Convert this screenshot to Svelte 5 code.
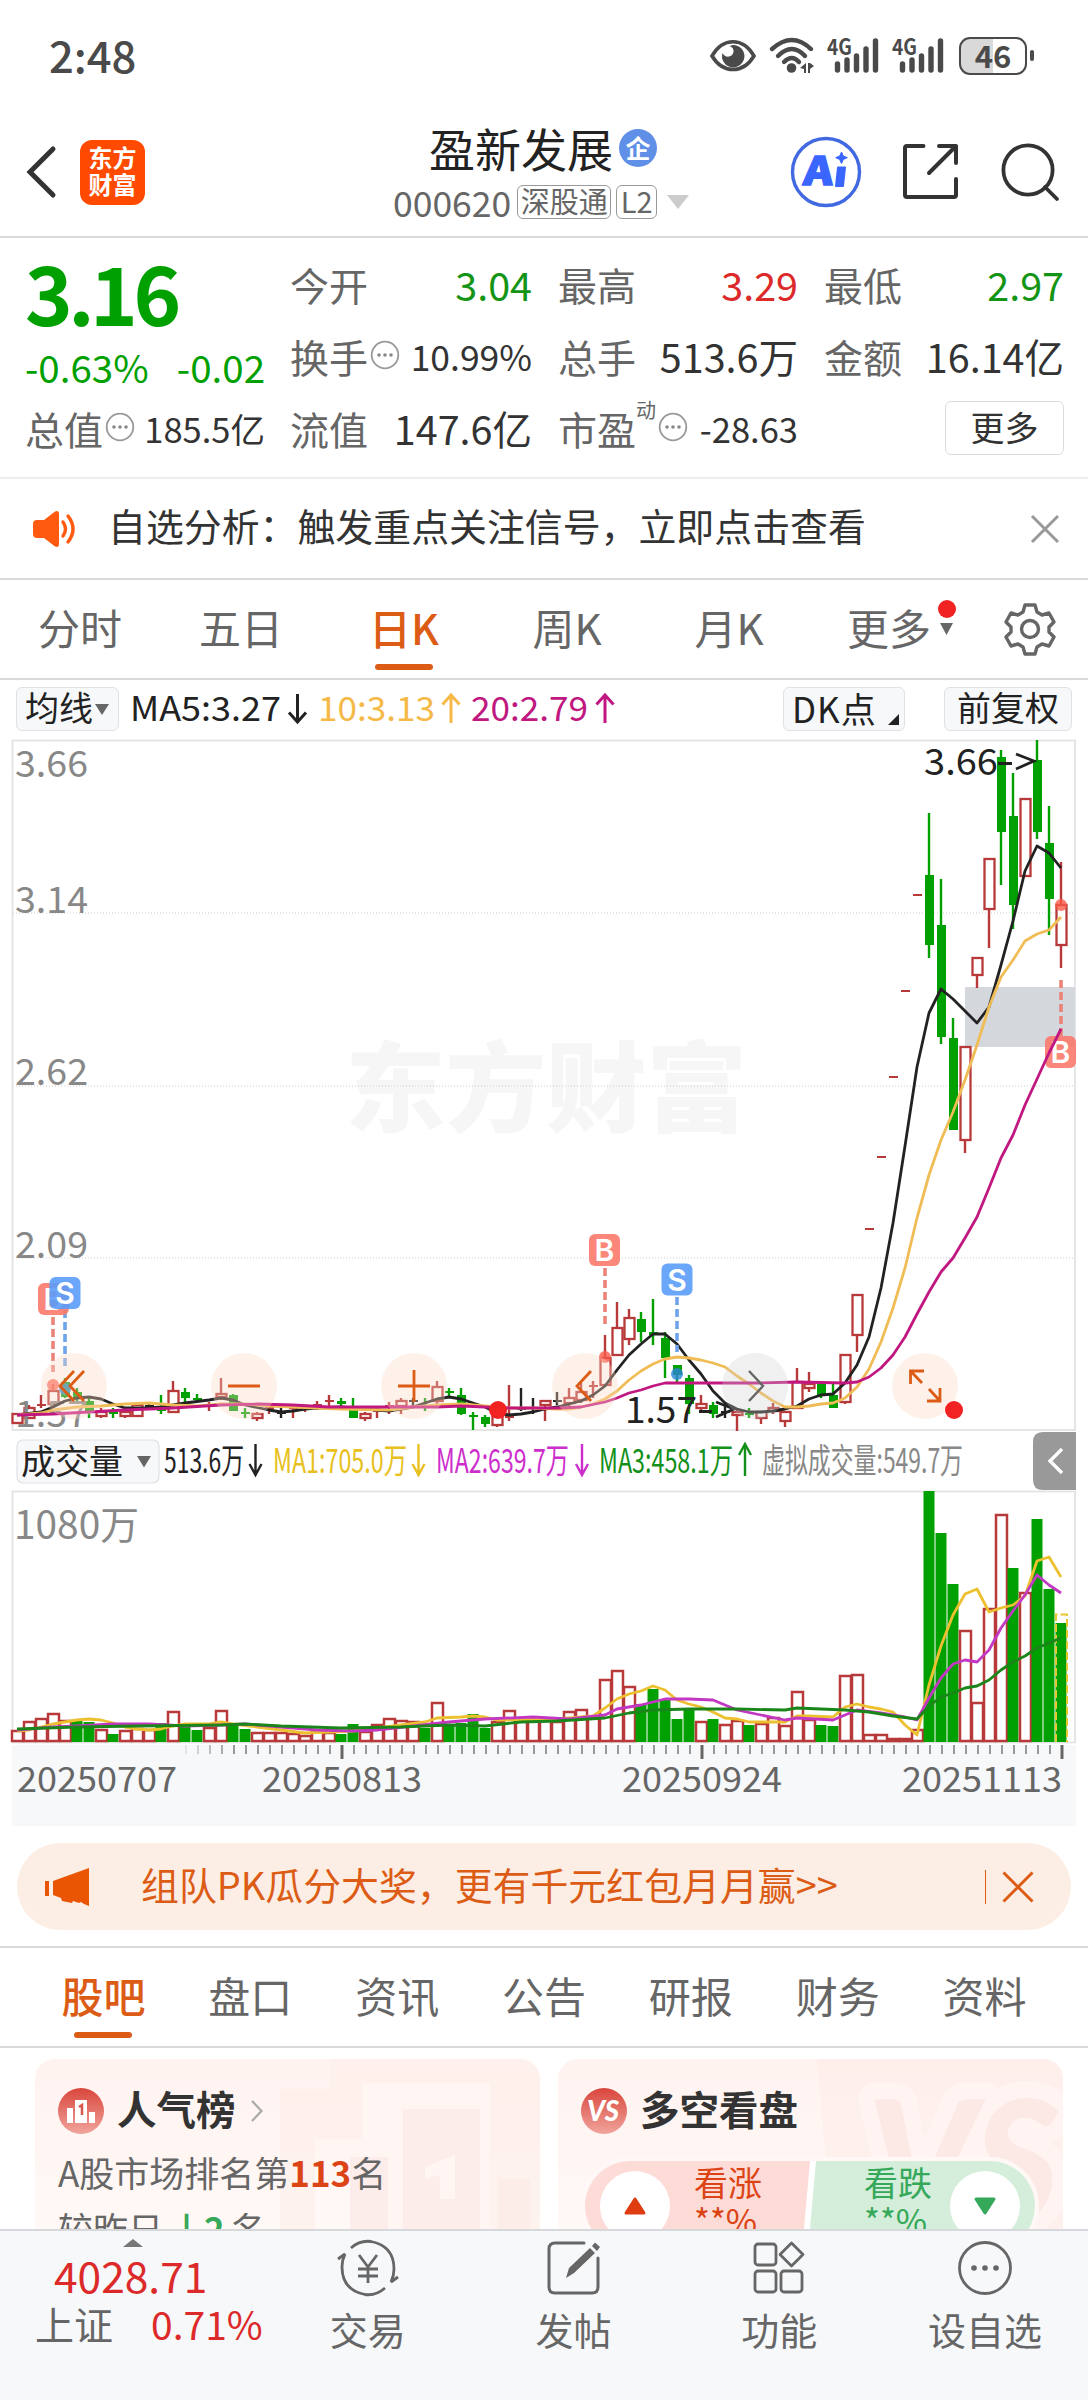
<!-- App.svelte -->
<script lang="ts">
  type Candle = [string, number, number, number, number];
  type Point = [number, number];

  const stats = [
    [
      { label: '今开', value: '3.04', tone: 'down' },
      { label: '最高', value: '3.29', tone: 'up' },
      { label: '最低', value: '2.97', tone: 'down' }
    ],
    [
      { label: '换手', value: '10.99%', info: true, size: 'mid' },
      { label: '总手', value: '513.6万' },
      { label: '金额', value: '16.14亿' }
    ]
  ];

  const periods = [
    { name: '分时', width: 160 },
    { name: '五日', width: 162 },
    { name: '日K', width: 164 },
    { name: '周K', width: 162 },
    { name: '月K', width: 162 }
  ];
  const activePeriod = '日K';

  const sections = ['股吧', '盘口', '资讯', '公告', '研报', '财务', '资料'];
  const activeSection = '股吧';

  // r = hollow red, g = solid green, k = flat; then body top, body bottom, high, low
  const candles: Candle[] = [
    ['r', 1414, 1423, 1413, 1424], ['r', 1408, 1418, 1405, 1419], ['r', 1404, 1405, 1395, 1408],
    ['r', 1391, 1404, 1384, 1405], ['g', 1382, 1397, 1378, 1398], ['g', 1392, 1399, 1388, 1403],
    ['g', 1401, 1411, 1398, 1418], ['r', 1412, 1416, 1408, 1418], ['g', 1412, 1414, 1408, 1418],
    ['r', 1412, 1416, 1410, 1418], ['r', 1405, 1416, 1402, 1416], ['k', 1405, 1407, 1402, 1410],
    ['g', 1409, 1411, 1395, 1414], ['r', 1391, 1412, 1381, 1413], ['g', 1392, 1398, 1388, 1402],
    ['g', 1398, 1400, 1394, 1402], ['r', 1404, 1406, 1402, 1411], ['r', 1394, 1397, 1378, 1400],
    ['g', 1395, 1411, 1394, 1411], ['g', 1412, 1414, 1408, 1418], ['r', 1414, 1418, 1412, 1421],
    ['r', 1407, 1408, 1403, 1414], ['k', 1412, 1414, 1408, 1418], ['r', 1407, 1409, 1406, 1418],
    ['r', 1408, 1409, 1405, 1412], ['r', 1404, 1405, 1401, 1410], ['r', 1400, 1402, 1395, 1406],
    ['g', 1401, 1404, 1398, 1406], ['g', 1407, 1418, 1398, 1418], ['r', 1414, 1418, 1412, 1421],
    ['r', 1410, 1411, 1406, 1418], ['r', 1405, 1406, 1402, 1414], ['r', 1401, 1406, 1398, 1414],
    ['k', 1400, 1402, 1398, 1406], ['g', 1405, 1407, 1398, 1411], ['r', 1387, 1401, 1381, 1405],
    ['g', 1391, 1393, 1388, 1398], ['g', 1395, 1414, 1388, 1415], ['g', 1415, 1417, 1412, 1430],
    ['g', 1417, 1424, 1415, 1427], ['r', 1416, 1425, 1414, 1427], ['r', 1416, 1418, 1385, 1421],
    ['k', 1408, 1409, 1388, 1411], ['k', 1407, 1409, 1398, 1414], ['r', 1401, 1405, 1400, 1421],
    ['k', 1400, 1402, 1392, 1405], ['r', 1398, 1403, 1388, 1408], ['r', 1392, 1400, 1383, 1403],
    ['r', 1385, 1386, 1381, 1398], ['r', 1358, 1385, 1335, 1386], ['r', 1328, 1355, 1302, 1356],
    ['r', 1318, 1339, 1309, 1345], ['g', 1319, 1332, 1312, 1342], ['g', 1332, 1335, 1299, 1345],
    ['g', 1338, 1358, 1332, 1378], ['g', 1365, 1375, 1365, 1382], ['g', 1378, 1404, 1375, 1414],
    ['r', 1404, 1408, 1395, 1412], ['g', 1405, 1414, 1402, 1418], ['k', 1411, 1413, 1405, 1418],
    ['r', 1412, 1415, 1410, 1431], ['g', 1413, 1415, 1408, 1418], ['r', 1412, 1418, 1411, 1424],
    ['r', 1408, 1411, 1403, 1414], ['r', 1412, 1421, 1411, 1427], ['r', 1382, 1408, 1368, 1409],
    ['r', 1384, 1388, 1372, 1392], ['g', 1383, 1395, 1382, 1398], ['g', 1395, 1408, 1382, 1408],
    ['r', 1355, 1402, 1354, 1404], ['r', 1295, 1335, 1295, 1352], ['k2', 1228, 1230, 1228, 1230],
    ['k2', 1156, 1158, 1156, 1158], ['k2', 1076, 1078, 1076, 1078], ['k2', 990, 992, 990, 992],
    ['k2', 894, 896, 894, 896], ['g', 875, 945, 813, 958], ['g', 925, 1037, 879, 1044],
    ['g', 1038, 1130, 1018, 1130], ['r', 1047, 1140, 1047, 1153], ['r', 958, 975, 958, 988],
    ['r', 859, 909, 859, 948], ['g', 757, 832, 750, 885], ['g', 816, 905, 773, 929],
    ['r', 799, 876, 799, 876], ['g', 760, 832, 740, 839], ['g', 843, 899, 806, 935],
    ['r', 905, 945, 862, 968]
  ];

  // [candle index, y]
  const ma5: Point[] = [
    [0, 1415], [2, 1412], [3, 1407], [4, 1401], [5, 1398], [6, 1397], [7, 1399], [8, 1404], [9, 1408],
    [11, 1408], [12, 1407], [13, 1405], [14, 1403], [16, 1400], [17, 1398], [18, 1400], [19, 1405],
    [21, 1410], [22, 1412], [23, 1411], [24, 1409], [25, 1408], [27, 1407], [29, 1409], [31, 1411],
    [32, 1409], [33, 1407], [34, 1403], [35, 1399], [36, 1397], [37, 1399], [38, 1403], [39, 1407],
    [40, 1413], [41, 1415], [42, 1414], [43, 1412], [44, 1409], [45, 1407], [46, 1404], [47, 1401],
    [48, 1395], [49, 1386], [50, 1370], [51, 1355], [52, 1344], [53, 1334], [54, 1334], [55, 1344],
    [56, 1360], [57, 1374], [58, 1391], [59, 1403], [60, 1409], [61, 1412], [62, 1412], [63, 1411],
    [64, 1409], [65, 1406], [66, 1399], [67, 1395], [68, 1394], [69, 1383], [70, 1365], [71, 1337],
    [72, 1288], [73, 1223], [74, 1146], [75, 1067], [76, 1013], [77, 989], [78, 999], [79, 1011],
    [80, 1023], [81, 1007], [82, 965], [83, 921], [84, 871], [85, 846], [86, 853], [87, 868]
  ];
  const ma10: Point[] = [
    [0, 1415], [2, 1413], [3, 1410], [5, 1407], [7, 1406], [9, 1404], [11, 1403], [13, 1405],
    [15, 1406], [17, 1404], [19, 1404], [21, 1406], [23, 1407], [27, 1409], [31, 1410], [33, 1407],
    [35, 1405], [37, 1404], [39, 1406], [41, 1408], [43, 1408], [45, 1409], [46, 1409], [47, 1407],
    [48, 1404], [49, 1399], [50, 1391], [51, 1380], [52, 1371], [53, 1364], [54, 1359], [55, 1357],
    [56, 1358], [57, 1360], [58, 1363], [59, 1367], [60, 1376], [61, 1384], [62, 1393], [63, 1401],
    [64, 1407], [65, 1407], [66, 1406], [67, 1404], [68, 1403], [69, 1398], [70, 1387], [71, 1369],
    [72, 1342], [73, 1308], [74, 1268], [75, 1218], [76, 1175], [77, 1140], [78, 1112], [79, 1080],
    [80, 1045], [81, 1007], [82, 977], [83, 960], [84, 941], [85, 934], [86, 930], [87, 917]
  ];
  const ma20: Point[] = [
    [0, 1415], [3, 1414], [6, 1412], [9, 1410], [13, 1408], [17, 1405], [20, 1404], [23, 1405],
    [26, 1407], [30, 1407], [35, 1407], [37, 1406], [41, 1408], [45, 1408], [47, 1407], [49, 1402],
    [50, 1398], [51, 1393], [52, 1390], [53, 1386], [54, 1383], [57, 1383], [62, 1383], [65, 1382],
    [69, 1383], [70, 1382], [71, 1377], [72, 1368], [73, 1355], [74, 1337], [75, 1314], [76, 1292],
    [77, 1272], [78, 1258], [79, 1238], [80, 1217], [81, 1188], [82, 1158], [83, 1135], [84, 1105],
    [85, 1079], [86, 1053], [87, 1029]
  ];

  // bar heights; negative means a falling day
  const volumes = [
    11, 20, 23, 28, 21, -21, -20, 12, -8, 11, 13, 12, -19, 30, -17, -12, 14, 31, -18, -13, 9, 9, 9, 8,
    6, 11, 9, -8, -18, 10, 17, 23, 21, 20, -14, 39, -17, -19, -28, -14, 20, 31, 21, 21, 21, 20, 30, 32,
    24, 62, 71, 55, -38, -53, -42, -23, -34, 20, -23, 17, 21, -17, 18, 24, 16, 50, 22, -17, -16, 66,
    67, 7, 7, 3, 3, 12, -251, -209, -158, 111, 39, 133, 227, -174, 149, -223, -153, -119
  ];
  const vol5: Point[] = [
    [0, 11], [1, 12], [2, 15], [3, 18], [4, 20], [5, 22], [6, 23], [7, 22], [8, 19], [9, 15], [10, 13],
    [11, 12], [12, 13], [13, 16], [14, 18], [16, 18], [17, 20], [18, 18], [20, 15], [22, 12], [24, 9],
    [26, 10], [28, 11], [30, 14], [32, 17], [34, 20], [35, 24], [37, 25], [38, 26], [39, 25], [40, 22],
    [45, 23], [47, 25], [48, 26], [49, 34], [50, 43], [51, 48], [52, 51], [53, 56], [54, 52], [55, 42],
    [56, 38], [57, 35], [58, 30], [59, 24], [60, 23], [61, 20], [64, 20], [65, 26], [66, 26], [68, 25],
    [69, 35], [70, 38], [71, 35], [72, 33], [73, 30], [74, 17], [75, 7], [76, 57], [77, 96], [78, 127],
    [79, 148], [80, 153], [81, 130], [82, 134], [83, 137], [84, 146], [85, 181], [86, 185], [87, 165]
  ];
  const vol10: Point[] = [
    [0, 12], [3, 15], [5, 16], [8, 18], [11, 18], [14, 16], [17, 17], [19, 18], [22, 15], [25, 12],
    [28, 11], [30, 12], [33, 16], [36, 20], [39, 23], [43, 25], [46, 23], [49, 27], [50, 33], [52, 37],
    [54, 43], [56, 43], [58, 42], [59, 37], [60, 32], [62, 27], [64, 22], [65, 24], [68, 22], [69, 27],
    [70, 32], [72, 29], [74, 25], [75, 22], [76, 44], [77, 64], [78, 78], [79, 82], [80, 80], [81, 92],
    [82, 114], [83, 131], [84, 147], [85, 167], [86, 157], [87, 149]
  ];
  const vol20: Point[] = [
    [0, 13], [5, 15], [10, 16], [17, 17], [19, 18], [22, 16], [27, 14], [32, 15], [36, 17], [39, 16],
    [42, 20], [45, 21], [49, 24], [51, 29], [53, 32], [56, 33], [60, 33], [64, 32], [65, 34], [69, 32],
    [71, 30], [73, 26], [75, 23], [76, 36], [77, 45], [78, 49], [79, 54], [80, 56], [81, 62], [82, 72],
    [83, 80], [84, 86], [85, 94], [86, 99], [87, 104]
  ];

  const grid = [913, 1086, 1258];
  const scale: [string, number][] = [
    ['3.66', 777], ['3.14', 913], ['2.62', 1085], ['2.09', 1258], ['1.57', 1427]
  ];
  const dates: [string, number][] = [
    ['20250707', 17], ['20250813', 262], ['20250924', 622], ['20251113', 902]
  ];

  const xAt = (i: number) => 17 + i * 12;
  const pricePath = (pts: Point[]) => pts.map(([i, y]) => `${xAt(i)},${y}`).join(' ');
  const volPath = (pts: Point[]) => pts.map(([i, h]) => `${xAt(i)},${1742 - h}`).join(' ');
  const candleColor = (kind: string) =>
    kind === 'g' ? '#00a000' : kind === 'k' ? '#222' : '#b8393a';
</script>

{#snippet info()}
  <svg class="info" width="30" height="30" viewBox="0 0 30 30">
    <circle cx="15" cy="15" r="13.3" fill="none" stroke="#999" stroke-width="1.8" />
    <circle cx="9" cy="15" r="1.8" fill="#888" />
    <circle cx="15" cy="15" r="1.8" fill="#888" />
    <circle cx="21" cy="15" r="1.8" fill="#888" />
  </svg>
{/snippet}

{#snippet signal()}
  <svg width="53" height="38" viewBox="0 0 53 38">
    <text x="0" y="18" font-size="22" font-weight="700" textLength="25" lengthAdjust="spacingAndGlyphs" fill="#4a4a4a">4G</text>
    <g stroke="#4a4a4a" stroke-width="5.4" stroke-linecap="round">
      <path d="M10.5 27v6M20 23v10M29.5 19v14M39 12v21M48.5 4v29" />
    </g>
  </svg>
{/snippet}

{#snippet marker(kind: string, x: number, y: number)}
  <rect {x} {y} width="31" height="32" rx="6" fill={kind === 'B' ? '#fa7a6a' : '#5a9cfa'} fill-opacity="0.9" />
  <text x={x + 15.5} y={y + 27} text-anchor="middle" font-size="30" font-weight="600" fill="#fff" class="sans">{kind}</text>
{/snippet}

<div class="screen">
  <div class="status">
    <span class="time">2:48</span>
    <div class="status-icons">
      <svg class="eye" width="48" height="34" viewBox="0 0 48 34">
        <path d="M3 17C14-2 34-2 45 17C34 35 14 35 3 17Z" fill="none" stroke="#4a4a4a" stroke-width="3.6" />
        <path d="M24 6a11.2 11.2 0 1 1-10.5 8c2 5 10 5 11-1 .4-3-1-5-4-6z" fill="#4a4a4a" />
      </svg>
      <svg class="wifi" width="46" height="38" viewBox="0 0 46 38">
        <g fill="none" stroke="#4a4a4a" stroke-width="4.4" stroke-linecap="round">
          <path d="M3 12Q23-6 42 12M9 19Q23 5 36 19M15 25Q23 17 30 25" />
        </g>
        <circle cx="22.5" cy="31" r="4.8" fill="#4a4a4a" />
        <path d="M31 31l6-5v10h-2v-4zM39 26h2l4 3-4 3v4h-2z" fill="#4a4a4a" />
      </svg>
      {@render signal()}
      {@render signal()}
      <div class="battery"><span>46</span></div>
    </div>
  </div>

  <header>
    <svg class="back" width="34" height="54" viewBox="0 0 34 54">
      <path d="M29 4L6 27L29 50" fill="none" stroke="#333" stroke-width="5" stroke-linecap="round" />
    </svg>
    <div class="logo"><span>东方</span><span>财富</span></div>
    <div class="title">
      <div class="name"><span>盈新发展</span><span class="badge">企</span></div>
      <div class="code">
        000620<span class="tag wide">深股通</span><span class="tag">L2</span>
        <svg width="22" height="14" viewBox="0 0 22 14"><path d="M0 0h22L11 14z" fill="#ccc" /></svg>
      </div>
    </div>
    <div class="actions">
      <svg width="72" height="72" viewBox="0 0 72 72">
        <circle cx="36" cy="36" r="33.5" fill="none" stroke="#4169e1" stroke-width="3.4" />
        <text x="13" y="49" font-size="39" font-weight="900" textLength="29" lengthAdjust="spacingAndGlyphs" fill="#3a66ff" stroke="#3a66ff" stroke-width="1.5" transform="skewX(-5) translate(4 0)">A</text>
        <path d="M48 31.5h7l-2 18.500h-7z" fill="#3a66ff" stroke="#3a66ff" stroke-width="2" stroke-linejoin="round" />
        <path d="M51.5 16l1.800 4 4 1.700-4 1.800-1.800 4-1.800-4-4-1.800 4-1.700z" fill="#3a66ff" stroke="#3a66ff" />
      </svg>
      <svg width="58" height="58" viewBox="0 0 58 58">
        <g fill="none" stroke="#333" stroke-width="4" stroke-linecap="round" stroke-linejoin="round">
          <path d="M21.5 3H5Q3 3 3 5V52Q3 54 5 54H52Q54 54 54 52V36" />
          <path d="M37 3H54V20M54 3L27 30" />
        </g>
      </svg>
      <svg width="60" height="60" viewBox="0 0 60 60">
        <g fill="none" stroke="#333" stroke-width="3.8" stroke-linecap="round">
          <circle cx="28" cy="28" r="24.600" />
          <path d="M45 45L57 57" />
        </g>
      </svg>
    </div>
  </header>

  <section class="quote">
    <div class="main-price">
      <div class="price">3.16</div>
      <div class="change"><span>-0.63%</span><span>-0.02</span></div>
      <div class="cell small"><span class="label">总值</span>{@render info()}<span class="value">185.5亿</span></div>
    </div>
    <div class="stats">
      {#each stats as row}
        {#each row as item}
          <div class="cell">
            <span class="label">{item.label}</span>
            {#if item.info}{@render info()}{/if}
            <span class="value {item.tone ?? ''} {item.size ?? ''}">{item.value}</span>
          </div>
        {/each}
      {/each}
      <div class="cell"><span class="label">流值</span><span class="value">147.6亿</span></div>
      <div class="cell small pe">
        <span class="label">市盈</span><sup>动</sup>{@render info()}<span class="value">-28.63</span>
      </div>
      <div class="cell end"><button class="more">更多</button></div>
    </div>
  </section>

  <section class="notice">
    <svg width="44" height="38" viewBox="0 0 44 38">
      <path d="M4 10h7L22 1.5Q26 0 26 4V34Q26 38 22 36.5L11 28H4Q0 28 0 24V14Q0 10 4 10Z" fill="#ff5a10" />
      <path d="M30 12Q35 19 30 26M35 6Q45 19 35 32" fill="none" stroke="#ff5a10" stroke-width="3.4" stroke-linecap="round" />
    </svg>
    <span>自选分析：触发重点关注信号，立即点击查看</span>
    <svg class="close" width="30" height="30" viewBox="0 0 30 30">
      <path d="M2 2L28 28M28 2L2 28" stroke="#999" stroke-width="3" fill="none" />
    </svg>
  </section>

  <nav class="periods">
    {#each periods as tab}
      <div class="tab" class:active={tab.name === activePeriod} style="width: {tab.width}px">
        <span>{tab.name}</span>
      </div>
    {/each}
    <div class="tab more-tab">
      <span>更多</span>
      <svg width="20" height="50" viewBox="0 0 20 50">
        <circle cx="11" cy="11" r="9" fill="#f02222" />
        <path d="M4 25h13L10.5 37z" fill="#666" />
      </svg>
    </div>
    <svg class="gear" width="52" height="52" viewBox="0 0 52 52">
      <g fill="none" stroke="#666" stroke-width="3.4" stroke-linejoin="round">
        <path d="M21 2h10l2 7 5 3 7-2 5 9-5 5v5l5 5-5 9-7-2-5 3-2 7H21l-2-7-5-3-7 2-5-9 5-5v-5l-5-5 5-9 7 2 5-3z" />
        <circle cx="26" cy="26" r="8.5" />
      </g>
    </svg>
  </nav>

  <div class="ma-row">
    <button class="chip ma"><span>均线</span><i class="tri"></i></button>
    <svg width="500" height="50" viewBox="125 685 500 50">
      <g font-size="34">
        <text x="130" y="722" textLength="151" lengthAdjust="spacingAndGlyphs" fill="#222">MA5:3.27</text>
        <text x="318" y="722" textLength="117" lengthAdjust="spacingAndGlyphs" fill="#f5b947">10:3.13</text>
        <text x="471" y="722" textLength="117" lengthAdjust="spacingAndGlyphs" fill="#c01880">20:2.79</text>
      </g>
      <g fill="none" stroke-width="3">
        <path d="M297.5 695V722M289 713.5L297.5 723L306 713.5" stroke="#222" />
        <path d="M451 724V697M442.5 705.5L451 696L459.5 705.5" stroke="#f5b947" />
        <path d="M605 724V697M596.5 705.5L605 696L613.5 705.5" stroke="#c01880" />
      </g>
    </svg>
    <button class="chip dk"><span>DK点</span><i class="corner"></i></button>
    <button class="chip right"><span>前复权</span></button>
  </div>

  <svg class="chart" width="1088" height="1094" viewBox="0 736 1088 1094">
    <!-- price panel -->
    <text x="546" y="1124" text-anchor="middle" font-size="98" font-weight="900" textLength="402" lengthAdjust="spacingAndGlyphs" fill="#f6f6f6">东方财富</text>
    {#each grid as y}
      <line x1="13" x2="1075" y1={y} y2={y} stroke="#ccc" stroke-dasharray="1 2" />
    {/each}
    <rect x="12.5" y="740.5" width="1062.5" height="689.5" fill="none" stroke="#e3e3e3" stroke-width="1.8" />
    <rect x="965" y="987" width="110" height="60" fill="#d4d7dc" />

    {#each candles as [kind, top, bottom, high, low], i}
      {@const x = xAt(i)}
      {@const color = candleColor(kind)}
      {#if high < top}<line x1={x} x2={x} y1={high} y2={top} stroke={color} stroke-width="2.4" />{/if}
      {#if low > bottom}<line x1={x} x2={x} y1={bottom} y2={low} stroke={color} stroke-width="2.4" />{/if}
      {#if kind === 'r' && bottom - top > 2}
        <rect x={x - 4.5} y={top} width="10" height={bottom - top} fill="#fff" stroke={color} stroke-width="2.3" />
      {:else}
        <rect x={x - 4} y={top} width="9" height={Math.max(bottom - top, 2)} fill={color} />
      {/if}
    {/each}

    <g font-size="37" fill="#888">
      {#each scale as [label, y]}
        <text x="15" {y} textLength="73" lengthAdjust="spacingAndGlyphs">{label}</text>
      {/each}
    </g>

    <g fill="none" stroke-width="2.8" stroke-linejoin="round">
      <polyline points={pricePath(ma5)} stroke="#222" />
      <polyline points={pricePath(ma10)} stroke="#f0bc55" />
    </g>

    <g fill="none" stroke-width="3.6" stroke-dasharray="8 4">
      <path d="M53 1317V1372M605 1268V1325M1061 980V1036" stroke="#ea8478" />
      <path d="M65 1310V1366M677 1297V1352" stroke="#6fa3ea" />
    </g>
    <g fill="#fa5a48" fill-opacity="0.8">
      <circle cx="53" cy="1385" r="6" />
      <circle cx="605" cy="1357" r="6" />
      <circle cx="1061" cy="905" r="6" />
    </g>
    <g fill="#2a86d8" fill-opacity="0.8">
      <circle cx="65" cy="1389" r="6" />
      <circle cx="677" cy="1374" r="6" />
    </g>
    {@render marker('B', 38, 1283)}
    {@render marker('S', 49.5, 1277)}
    {@render marker('B', 589, 1234)}
    {@render marker('S', 661.5, 1263.5)}
    {@render marker('B', 1045, 1036)}
    <polyline points={pricePath(ma20)} fill="none" stroke="#c01880" stroke-width="2.8" stroke-linejoin="round" />

    <g fill="#222" font-size="37">
      <text x="924" y="775" textLength="74" lengthAdjust="spacingAndGlyphs">3.66</text>
      <text x="625" y="1423" textLength="72" lengthAdjust="spacingAndGlyphs">1.57</text>
    </g>
    <g fill="none" stroke="#222" stroke-width="2.8">
      <path d="M998 763.5H1012M1016 754L1034 761L1016 769" />
      <path d="M699 1411.5H712M716 1402L734 1409L716 1417" />
    </g>

    <!-- chart controls -->
    <g fill="#fbd9c6" fill-opacity="0.36">
      <circle cx="74" cy="1386" r="33" />
      <circle cx="244" cy="1386" r="33" />
      <circle cx="414" cy="1386" r="33" />
      <circle cx="585" cy="1386" r="33" />
      <circle cx="925" cy="1386" r="33" />
    </g>
    <circle cx="755" cy="1386" r="33" fill="#ccc" fill-opacity="0.3" />
    <g fill="none" stroke="#dc5c16" stroke-width="2.8">
      <path d="M74 1371L60 1386L74 1401M84 1371L70 1386L84 1401" />
      <path d="M228 1386H260M398 1386H430M414 1370V1402" />
      <path d="M591 1371L577 1386L591 1401" />
      <path d="M924 1371H910.5V1384M911 1371.5L922 1383M927 1401H940V1388M940 1401L929 1389" />
    </g>
    <path d="M749 1371L763 1386L749 1401" fill="none" stroke="#666" stroke-width="2.4" />
    <circle cx="498" cy="1410" r="9" fill="#f22222" />
    <circle cx="954" cy="1410" r="9" fill="#f22222" />

    <!-- volume indicator values -->
    <rect x="17" y="1440" width="142" height="43" rx="6" fill="#f7f8fa" stroke="#dfe1e6" stroke-width="1.2" />
    <text x="21" y="1474" font-size="34" fill="#222">成交量</text>
    <path d="M137 1456h14l-7 11.5z" fill="#666" />
    <g font-size="34">
      <text x="164" y="1473" textLength="80" lengthAdjust="spacingAndGlyphs" fill="#222">513.6万</text>
      <text x="273" y="1473" textLength="134" lengthAdjust="spacingAndGlyphs" fill="#e8c020">MA1:705.0万</text>
      <text x="436" y="1473" textLength="133" lengthAdjust="spacingAndGlyphs" fill="#cc2ecc">MA2:639.7万</text>
      <text x="599" y="1473" textLength="134" lengthAdjust="spacingAndGlyphs" fill="#12901a">MA3:458.1万</text>
      <text x="762" y="1473" textLength="201" lengthAdjust="spacingAndGlyphs" fill="#888">虚拟成交量:549.7万</text>
    </g>
    <g fill="none" stroke-width="2.4">
      <path d="M255.5 1444V1474M249.5 1464L255.5 1475L261.5 1464" stroke="#222" />
      <path d="M418.5 1444V1474M412.5 1464L418.5 1475L424.5 1464" stroke="#e8c020" />
      <path d="M582 1444V1474M576 1464L582 1475L588 1464" stroke="#cc2ecc" />
      <path d="M745 1476V1446M739 1455L745 1444L751 1455" stroke="#12901a" />
    </g>
    <path d="M1076 1432H1043Q1033 1432 1033 1442V1480Q1033 1490 1043 1490H1076Z" fill="#999" />
    <path d="M1062 1449L1050 1461L1062 1473" fill="none" stroke="#fff" stroke-width="3.4" />

    <!-- volume panel -->
    <rect x="12.5" y="1491.5" width="1062.5" height="251" fill="none" stroke="#e3e3e3" stroke-width="1.8" />
    <text x="14" y="1539" font-size="39" fill="#888" textLength="125" lengthAdjust="spacingAndGlyphs">1080万</text>
    {#each volumes as v, i}
      {@const x = xAt(i)}
      {#if v < 0}
        <rect x={x - 5.5} y={1742 + v} width="11" height={-v} fill="#00a000" />
      {:else}
        <rect x={x - 5} y={1742 - v} width="11" height={v - 1} fill="#fff" stroke="#b8393a" stroke-width="2.5" />
      {/if}
    {/each}
    <path d="M1056 1742V1614.5H1067V1742" fill="none" stroke="#e8c830" stroke-width="2" stroke-dasharray="8 3" />
    <g fill="none" stroke-width="2.8" stroke-linejoin="round">
      <polyline points={volPath(vol5)} stroke="#ecc02e" />
      <polyline points={volPath(vol10)} stroke="#c238c2" />
      <polyline points={volPath(vol20)} stroke="#1a861a" />
    </g>

    <!-- time axis -->
    <rect x="12" y="1745" width="1064" height="81" fill="#f7f8fa" />
    {#each volumes as _, i}
      {#if i > 13}
        {@const major = i === 27 || i === 57 || i === 87}
        <line x1={xAt(i) + 1} x2={xAt(i) + 1} y1="1745" y2={major ? 1759 : 1754} stroke={major ? '#666' : '#999'} stroke-width={major ? 3 : 2} opacity={i < 18 ? (i - 13) / 5 : 1} />
      {/if}
    {/each}
    <g font-size="35" fill="#666">
      {#each dates as [label, x]}
        <text {x} y="1792" textLength="160" lengthAdjust="spacingAndGlyphs">{label}</text>
      {/each}
    </g>
  </svg>

  <div class="banner">
    <svg width="46" height="40" viewBox="0 0 46 40">
      <path d="M0 14h4v15H0zM8 14L44 1V39L39 37 36 35 34 36 28 34 27 36 17 34 16 31 8 28Z" fill="#ea5504" />
    </svg>
    <span>组队PK瓜分大奖，更有千元红包月月赢>></span>
    <i></i>
    <svg width="32" height="32" viewBox="0 0 32 32">
      <path d="M1.5 1.5L30.5 30.5M30.5 1.5L1.5 30.5" stroke="#dc5c16" stroke-width="3" fill="none" />
    </svg>
  </div>

  <nav class="sections">
    {#each sections as name}
      <div class="tab" class:active={name === activeSection}><span>{name}</span></div>
    {/each}
  </nav>

  <div class="cards">
    <div class="card">
      <svg class="deco" width="260" height="200" viewBox="0 0 260 200">
        <path d="M50 0H260V200H90V80H35V200H0V30H50z" fill="#fdeeea" fill-opacity="0.6" />
        <path d="M82 24H210V200H70V80H82z" fill="#fff6f3" />
        <path d="M123 50H200V200H123zM70 98H108V200H70zM218 120H250V200H218z" fill="#fcebe7" fill-opacity="0.8" />
        <path d="M145 108L175 96V140H160V116L145 120z" fill="#fff5f2" />
      </svg>
      <div class="card-title">
        <svg width="46" height="46" viewBox="0 0 46 46">
          <defs>
            <linearGradient id="rank" x2="0" y2="1"><stop stop-color="#d9463c" /><stop offset="1" stop-color="#f0a49c" /></linearGradient>
          </defs>
          <circle cx="23" cy="23" r="23" fill="url(#rank)" />
          <path d="M9 20h6v15H9zM17 12h12v23H17zM31 24h6v11h-6z" fill="#fff" />
          <path d="M21 19l3-2v10" fill="none" stroke="#d9564c" stroke-width="2.5" />
        </svg>
        <b>人气榜</b>
        <svg class="arrow" width="14" height="22" viewBox="0 0 14 22"><path d="M2 1L11.5 11L2 21" fill="none" stroke="#aaa" stroke-width="2.2" /></svg>
      </div>
      <p>A股市场排名第<strong>113</strong>名</p>
      <p class="second">较昨日<em>↓2</em>名</p>
    </div>
    <div class="card">
      <svg class="deco" width="246" height="200" viewBox="0 0 246 200">
        <path d="M0 0H246V200H18z" fill="#fdeeea" fill-opacity="0.75" />
        <g font-size="170" font-weight="900" font-style="italic" class="vs">
          <text x="50" y="164" textLength="192" lengthAdjust="spacingAndGlyphs" fill="#fce8e5" stroke="#fff4f1" stroke-width="34" paint-order="stroke" stroke-linejoin="round">VS</text>
        </g>
      </svg>
      <div class="card-title">
        <svg width="46" height="46" viewBox="0 0 46 46">
          <circle cx="23" cy="23" r="23" fill="url(#rank)" />
          <text x="22" y="33" text-anchor="middle" font-size="29" font-weight="900" font-style="italic" textLength="32" lengthAdjust="spacingAndGlyphs" fill="#fff" class="vs">VS</text>
        </svg>
        <b>多空看盘</b>
      </div>
      <div class="vote">
        <div class="bull">
          <i><svg width="22" height="18" viewBox="0 0 22 18"><path d="M11 2L20 16H2Z" fill="#e03c12" stroke="#e03c12" stroke-width="3" stroke-linejoin="round" /></svg></i>
          <div class="side">看涨<br />**%</div>
        </div>
        <div class="bear">
          <div class="side">看跌<br />**%</div>
          <i><svg width="22" height="18" viewBox="0 0 22 18"><path d="M11 16L20 2H2Z" fill="#36a85a" stroke="#36a85a" stroke-width="3" stroke-linejoin="round" /></svg></i>
        </div>
      </div>
    </div>
  </div>

  <footer>
    <div class="index">
      <svg width="20" height="8" viewBox="0 0 20 8"><path d="M10 0L20 8H0z" fill="#777" /></svg>
      <div class="points">4028.71</div>
      <div class="index-row"><span>上证</span><span class="pct">0.71%</span></div>
    </div>
    <div class="item">
      <svg width="64" height="56" viewBox="0 0 64 56">
        <g fill="none" stroke="#666" stroke-width="2.8">
          <path d="M15 8Q24 0 35 1.5Q58 6 58 29Q58 36 55 42L62 37M49 48Q40 56 29 54.5Q6 50 6 27Q6 20 9 14L2 19" />
          <path d="M23 15L32 27L41 15M32 27V43M22 29H42M22 36H42" />
        </g>
      </svg>
      <span>交易</span>
    </div>
    <div class="item">
      <svg width="56" height="56" viewBox="0 0 56 56">
        <path d="M38 3H9Q3 3 3 9V47Q3 53 9 53H46Q52 53 52 47V18" fill="none" stroke="#666" stroke-width="3" stroke-linecap="round" />
        <path d="M20 38L23 28 44 8 49 13 28 33ZM46 6L49 2.5 54 7 51 11Z" fill="#666" />
      </svg>
      <span>发帖</span>
    </div>
    <div class="item">
      <svg width="56" height="56" viewBox="0 0 56 56">
        <g fill="none" stroke="#666" stroke-width="2.8">
          <rect x="4" y="4" width="21" height="21" rx="3" />
          <rect x="4" y="31" width="21" height="21" rx="3" />
          <rect x="30" y="31" width="21" height="21" rx="3" />
          <path d="M40.5 3L52 14.5L40.5 26L29 14.5Z" stroke-linejoin="round" />
        </g>
      </svg>
      <span>功能</span>
    </div>
    <div class="item">
      <svg width="56" height="56" viewBox="0 0 56 56">
        <circle cx="28" cy="28" r="25.5" fill="none" stroke="#666" stroke-width="2.8" />
        <g fill="#666"><circle cx="17" cy="28" r="2.8" /><circle cx="28" cy="28" r="2.8" /><circle cx="39" cy="28" r="2.8" /></g>
      </svg>
      <span>设自选</span>
    </div>
  </footer>
</div>

<style>
  :global(body) {
    background: #fff;
  }

  .screen {
    width: 1088px;
    height: 2400px;
    display: flex;
    flex-direction: column;
    overflow: hidden;
    background: #fff;
    color: #333;
    font-family: 'Noto Sans CJK SC', 'Noto Sans', sans-serif;
    line-height: 1;
  }

  .screen * {
    box-sizing: border-box;
  }

  svg {
    display: block;
    flex: none;
    overflow: visible;
  }

  .sans {
    font-family: Inter, 'Liberation Sans', sans-serif;
  }

  .vs {
    font-family: Lato, 'Open Sans', sans-serif;
  }

  button {
    font: inherit;
    color: inherit;
    padding: 0;
    white-space: nowrap;
  }

  .status {
    height: 112px;
    flex: none;
    display: flex;
    justify-content: space-between;
    align-items: center;
    padding: 0 62px 0 49px;
  }

  .time {
    margin-bottom: 3px;
    font-size: 43.5px;
    font-weight: 500;
    color: #4a4a4a;
  }

  .status-icons {
    display: flex;
    align-items: center;
    gap: 12px;
  }

  .battery {
    position: relative;
    width: 68px;
    height: 38px;
    margin-left: 2px;
    margin-right: -1px;
    padding-bottom: 3px;
    border: 2.5px solid #4a4a4a;
    border-radius: 11px;
    background: linear-gradient(90deg, #d9d9d9 50%, #fff 50%);
    color: #4a4a4a;
    font-size: 31px;
    font-weight: 700;
    display: flex;
    justify-content: center;
    align-items: center;
  }

  .battery::after {
    content: '';
    position: absolute;
    right: -9px;
    top: 11px;
    width: 4px;
    height: 11px;
    border-radius: 2px;
    background: #4a4a4a;
  }

  header {
    height: 126px;
    flex: none;
    display: flex;
    align-items: center;
    padding: 0 28px 4px 24px;
    border-bottom: 2px solid #dadada;
  }

  .back {
    margin-right: 22px;
  }

  .logo {
    width: 65px;
    height: 65px;
    padding-bottom: 3px;
    border-radius: 12px;
    background: #ff4a00;
    color: #fff;
    font-size: 24px;
    font-weight: 700;
    display: flex;
    flex-direction: column;
    align-items: center;
    justify-content: center;
    gap: 3px;
  }

  .title {
    margin-left: 248px;
    width: 300px;
  }

  .name {
    font-size: 46px;
    color: #222;
    display: flex;
    align-items: center;
    padding-left: 36px;
  }

  .badge {
    width: 38px;
    height: 38px;
    margin: 2px 0 0 6px;
    padding-bottom: 2px;
    border-radius: 50%;
    background: #5f8fe6;
    color: #fff;
    font-size: 25px;
    font-weight: 700;
    display: flex;
    align-items: center;
    justify-content: center;
  }

  .code {
    display: flex;
    align-items: center;
    margin-top: 14px;
    font-size: 35.5px;
    color: #666;
  }

  .tag {
    height: 34px;
    width: 41px;
    margin-left: 5px;
    padding-bottom: 3px;
    border: 1.5px solid #999;
    border-radius: 6px;
    font-size: 29px;
    display: flex;
    align-items: center;
    justify-content: center;
  }

  .tag.wide {
    width: 94px;
    margin-left: 6px;
  }

  .code svg {
    margin-left: 10px;
  }

  .actions {
    display: flex;
    align-items: center;
    margin-left: auto;
    gap: 40px;
  }

  .quote {
    height: 241px;
    flex: none;
    display: flex;
    padding: 10px 24px 0 25px;
    border-bottom: 2px solid #eee;
  }

  .main-price {
    width: 240px;
    margin-right: 25px;
    color: #00a000;
  }

  .price {
    height: 92px;
    line-height: 86px;
    font-size: 81px;
    font-weight: 700;
    letter-spacing: -4.5px;
  }

  .change {
    height: 52px;
    display: flex;
    align-items: center;
    justify-content: space-between;
    font-size: 38.5px;
  }

  .stats {
    flex: 1;
    display: grid;
    grid-template-columns: 242px 240px 240px;
    grid-template-rows: 72px 72px 72px;
    column-gap: 26px;
  }

  .cell {
    display: flex;
    align-items: center;
    height: 72px;
    white-space: nowrap;
  }

  .label {
    font-size: 39px;
    color: #666;
  }

  .value {
    margin-left: auto;
    font-size: 39.5px;
    color: #333;
  }

  .value.mid {
    font-size: 35.5px;
  }

  .small .value {
    font-size: 34.5px;
  }

  .info {
    margin: 0 0 2px 2px;
  }

  .value.up {
    color: #dc2a2a;
  }

  .value.down {
    color: #149414;
  }

  .pe sup {
    align-self: flex-start;
    margin-top: 8px;
    font-size: 20px;
    line-height: 1;
    color: #666;
  }

  .end {
    justify-content: flex-end;
  }

  .more {
    width: 119px;
    height: 54px;
    padding-bottom: 2px;
    border: 1.5px solid #dcdcdc;
    border-radius: 6px;
    background: #fff;
    font-size: 34px;
    color: #333;
  }

  .notice {
    height: 101px;
    flex: none;
    display: flex;
    align-items: center;
    padding: 0 28px 0 33px;
    border-bottom: 2px solid #dadada;
    font-size: 37.9px;
    color: #333;
  }

  .notice span {
    margin: 0 0 7px 31px;
  }

  .close {
    margin-left: auto;
  }

  .periods {
    height: 100px;
    flex: none;
    display: flex;
    align-items: center;
    border-bottom: 2px solid #dadada;
  }

  .tab {
    height: 100%;
    display: flex;
    align-items: center;
    justify-content: center;
    position: relative;
    font-size: 42px;
    color: #666;
  }

  .tab span {
    margin-bottom: 4px;
  }

  .active {
    color: #dc5c16;
    font-weight: 500;
  }

  .active::after {
    content: '';
    position: absolute;
    bottom: 8px;
    width: 58px;
    height: 6px;
    border-radius: 3px;
    background: #dc5c16;
  }

  .more-tab {
    margin-left: 37px;
  }

  .more-tab svg {
    margin-left: 5px;
    margin-top: -12px;
  }

  .gear {
    margin-left: 48px;
  }

  .ma-row {
    height: 56px;
    flex: none;
    display: flex;
    align-items: center;
    padding: 2px 16px 0;
  }

  .ma-row svg {
    margin-left: 6px;
  }

  .chip {
    position: relative;
    height: 44px;
    border: 1.5px solid #dfe1e6;
    border-radius: 6px;
    background: #f7f8fa;
    font-size: 34px;
    color: #222;
    display: flex;
    align-items: center;
  }

  .chip span {
    margin-bottom: 4px;
  }

  .ma {
    width: 103px;
    padding-left: 8px;
  }

  .tri {
    margin-left: 2px;
    border: 7px solid transparent;
    border-top: 11px solid #666;
    border-bottom: 0;
  }

  .dk {
    width: 122px;
    margin-left: auto;
    padding-left: 8px;
    font-size: 35px;
    letter-spacing: 1px;
  }

  .corner {
    position: absolute;
    right: 5px;
    bottom: 5px;
    border-left: 11px solid transparent;
    border-bottom: 11px solid #222;
  }

  .right {
    width: 128px;
    margin-left: 39px;
    justify-content: center;
  }

  .chart {
    width: 1088px;
  }

  .banner {
    height: 87px;
    flex: none;
    display: flex;
    align-items: center;
    margin: 13px 17px 16px;
    padding: 0 37px 0 28px;
    border-radius: 44px;
    background: #fceee5;
    color: #dc5c16;
    font-size: 37.9px;
    white-space: nowrap;
  }

  .banner span {
    margin: 0 0 6px 50px;
  }

  .banner i {
    width: 1.5px;
    height: 34px;
    margin: 0 16px 0 auto;
    background: #dc5c16;
  }

  .sections {
    height: 102px;
    flex: none;
    display: flex;
    padding: 0 30px;
    border-top: 2px solid #dadada;
    border-bottom: 2px solid #dadada;
  }

  .sections .tab {
    flex: 1;
  }

  .cards {
    flex: 1;
    min-height: 0;
    overflow: hidden;
    display: flex;
    gap: 18px;
    padding: 11px 25px 0 35px;
  }

  .card {
    position: relative;
    width: 505px;
    height: 240px;
    padding: 29px 23px;
    border-radius: 20px;
    background: linear-gradient(#fff3f0, #fffbf9);
    overflow: hidden;
  }

  .deco {
    position: absolute;
    right: 0;
    top: 0;
  }

  .card-title {
    position: relative;
    display: flex;
    align-items: center;
    height: 46px;
    font-size: 39.5px;
  }

  .card-title b {
    margin: 0 0 6px 13px;
    font-weight: 700;
  }

  .arrow {
    margin-left: 14px;
  }

  .card p {
    position: relative;
    margin: 20px 0 0;
    font-size: 35px;
    line-height: 36px;
    color: #666;
    white-space: nowrap;
  }

  .card p.second {
    margin-top: 20px;
  }

  strong {
    color: #dc4416;
  }

  em {
    margin: 0 6px;
    color: #36a85a;
    font-style: normal;
    font-weight: 700;
  }

  .vote {
    position: relative;
    display: flex;
    width: 458px;
    height: 98px;
    margin: 23px 0 0;
    border: 4px solid #fff8f6;
    border-radius: 49px;
    overflow: hidden;
    background: #fff;
    font-size: 34px;
    line-height: 38px;
  }

  .vote i {
    width: 70px;
    height: 70px;
    border-radius: 50%;
    background: #fff;
    display: flex;
    align-items: center;
    justify-content: center;
  }

  .side {
    margin-bottom: 10px;
  }

  .bull,
  .bear {
    display: flex;
    align-items: center;
    padding: 0 15px;
  }

  .bull {
    width: 225px;
    gap: 24px;
    background: #fddcd8;
    color: #dc4416;
    clip-path: polygon(0 0, 100% 0, calc(100% - 8px) 100%, 0 100%);
  }

  .bear {
    width: 227px;
    margin-left: -2px;
    justify-content: flex-end;
    gap: 18px;
    background: #d5eedb;
    color: #36a85a;
    clip-path: polygon(8px 0, 100% 0, 100% 100%, 0 100%);
  }

  footer {
    height: 171px;
    flex: none;
    display: flex;
    border-top: 2px solid #d6d8dc;
    background: #f7f8fa;
    color: #666;
  }

  .index {
    width: 265px;
    padding-top: 8px;
  }

  .index > svg {
    margin-left: 123px;
  }

  .points {
    margin: 5px 0 0 54px;
    font-size: 42.5px;
    line-height: 46px;
    color: #dc2a2a;
  }

  .index-row {
    display: flex;
    align-items: center;
    margin-top: 3px;
    padding-left: 35px;
    font-size: 39px;
    line-height: 44px;
  }

  .pct {
    margin-left: 38px;
    color: #dc2a2a;
  }

  .item {
    width: 205.7px;
    display: flex;
    flex-direction: column;
    align-items: center;
    padding-top: 9px;
    gap: 14px;
    font-size: 38px;
  }
</style>
